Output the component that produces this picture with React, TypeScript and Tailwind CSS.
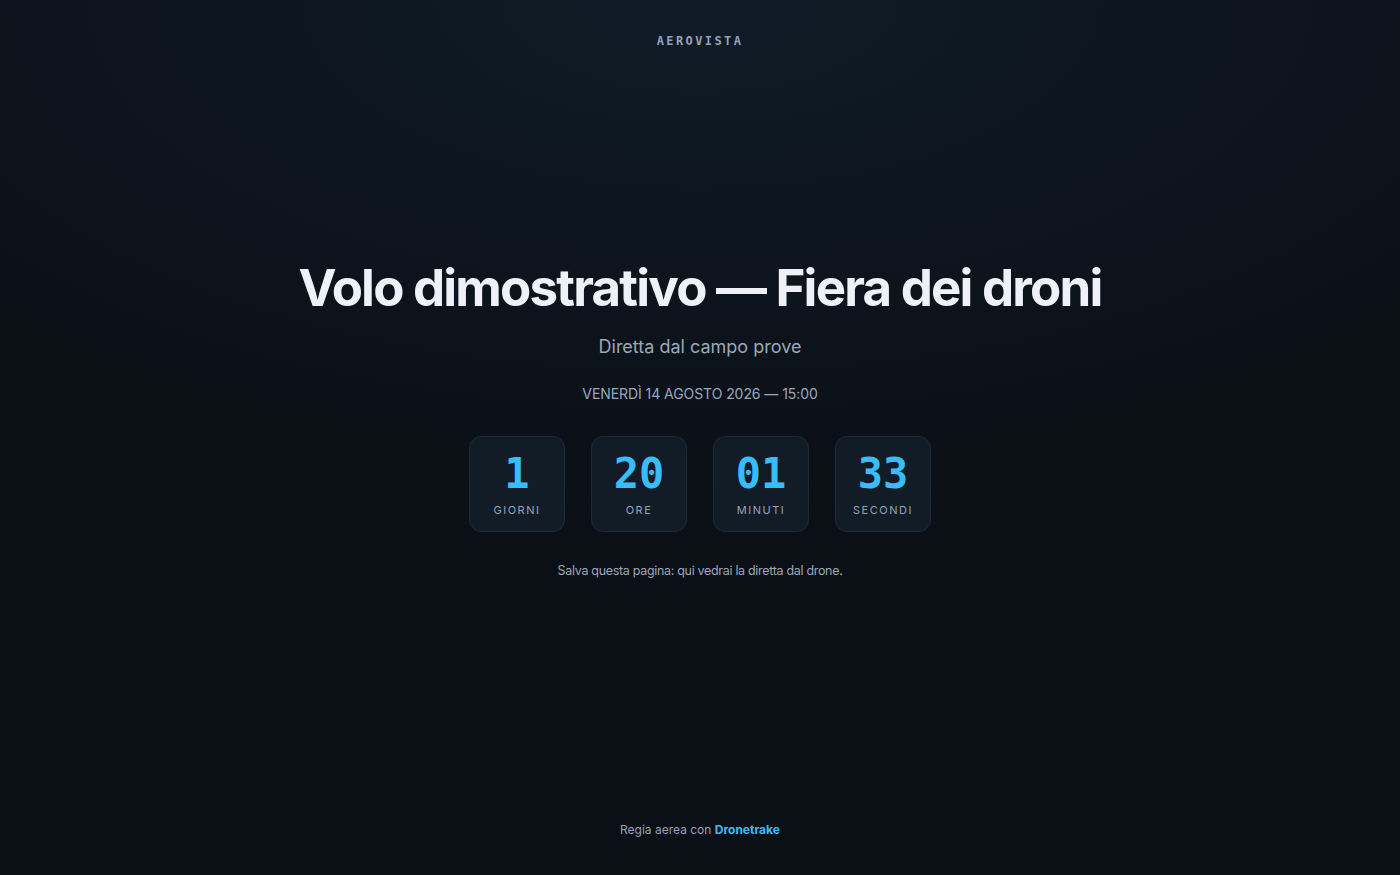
import React from "react";

const units = [
  { value: "1", label: "Giorni" },
  { value: "20", label: "Ore" },
  { value: "01", label: "Minuti" },
  { value: "33", label: "Secondi" },
];

const App: React.FC = () => {
  return (
    <div
      className="min-h-screen flex flex-col items-center bg-[#0b0f16] bg-[radial-gradient(ellipse_80%_60%_at_50%_0%,#0f1c27_0%,#0d141d_55%,#0b0f16_100%)] text-slate-400 font-['Inter','Noto_Sans',sans-serif]"
    >
      {/* Header */}
      <header className="pt-[27px]">
        <span className="font-['DejaVu_Sans_Mono','Liberation_Mono',monospace] font-bold text-[12px] tracking-[0.2em] text-[#94a3b8]">
          AEROVISTA
        </span>
      </header>

      {/* Main */}
      <main className="flex-1 flex flex-col items-center justify-center text-center pb-[30px]">
        <h1 className="text-[51px] leading-none font-bold tracking-[-0.035em] text-[#eef2f8]">
          Volo dimostrativo — Fiera dei droni
        </h1>
        <p className="mt-[20px] text-[18px] text-[#9aa8ba]">Diretta dal campo prove</p>
        <p className="mt-[23px] text-[14px] uppercase tracking-[-0.005em] text-[#9aa8ba]">
          Venerdì 14 agosto 2026 — 15:00
        </p>

        <div className="mt-[32px] flex gap-[26px]">
          {units.map((u) => (
            <div
              key={u.label}
              className="w-24 h-24 rounded-xl border border-[#1e2a38] bg-[#121c27] flex flex-col items-center pt-[16px]"
            >
              <span className="font-['DejaVu_Sans_Mono','Liberation_Mono',monospace] font-bold text-[42px] leading-none text-[#38bdf8]">
                {u.value}
              </span>
              <span className="mt-[7px] text-[11px] uppercase tracking-[0.14em] text-[#94a3b8]">
                {u.label}
              </span>
            </div>
          ))}
        </div>

        <p className="mt-[30px] text-[12.5px] tracking-[-0.025em] text-[#9aa8ba]">
          Salva questa pagina: qui vedrai la diretta dal drone.
        </p>
      </main>

      {/* Footer */}
      <footer className="pb-[36px] text-[12px] text-[#94a3b8]">
        Regia aerea con{" "}
        <span className="font-bold text-[#38bdf8]">Dronetrake</span>
      </footer>
    </div>
  );
};

export default App;
